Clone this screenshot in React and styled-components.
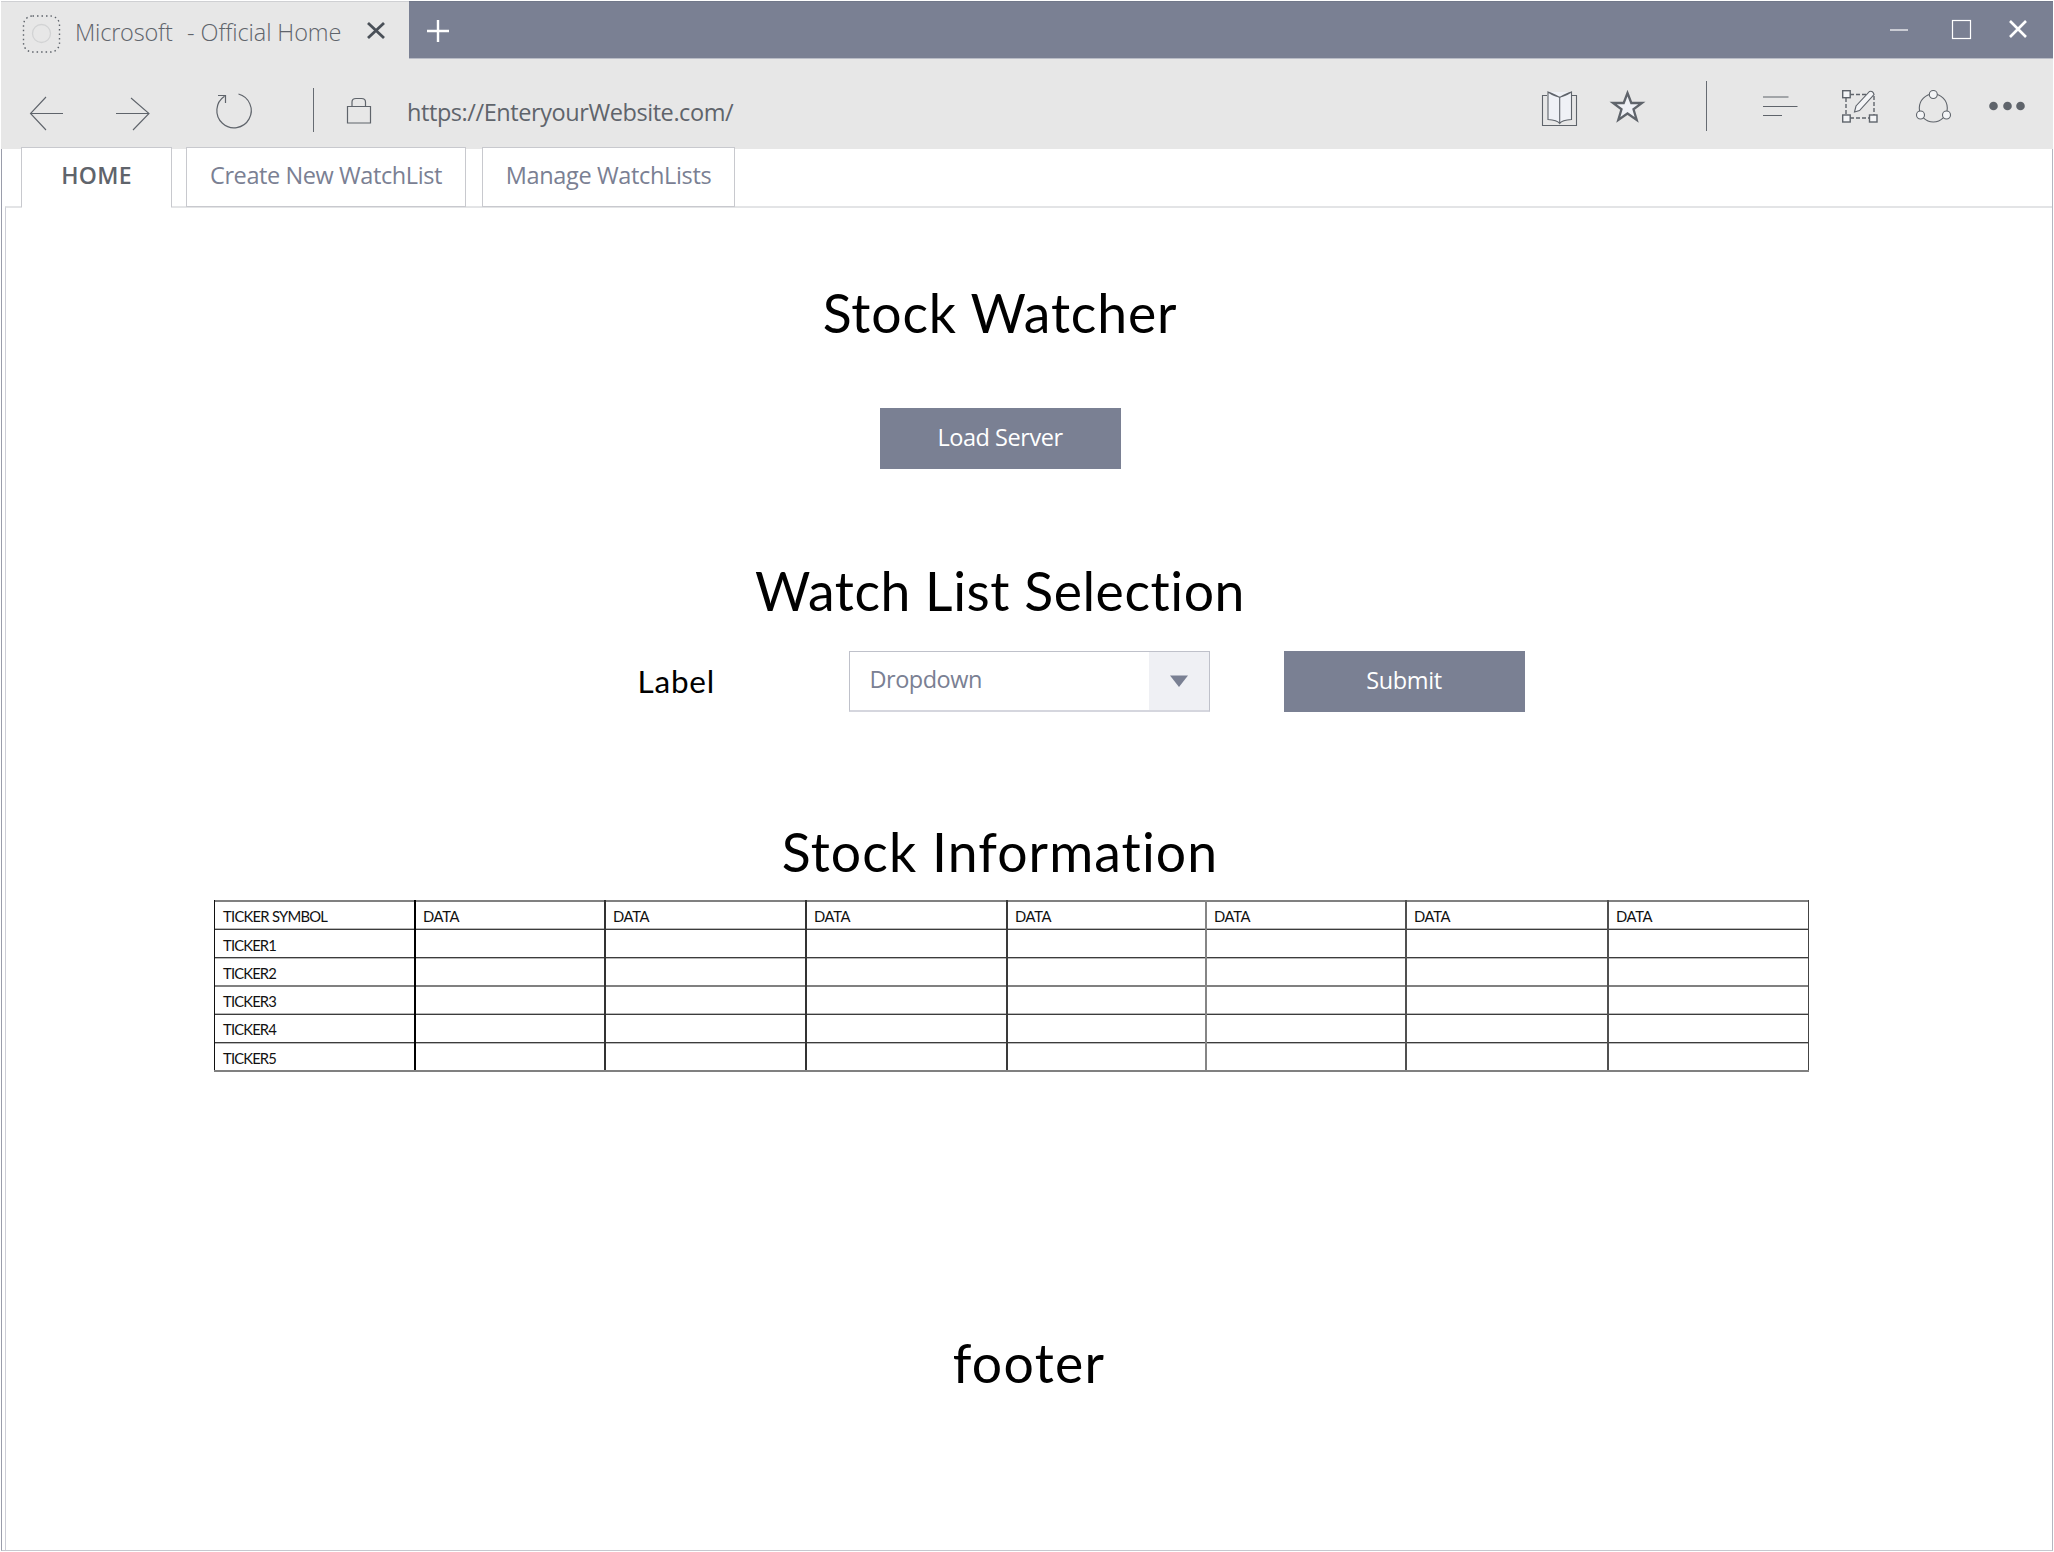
import React from "react";
import styled, { createGlobalStyle } from "styled-components";

const slate = "#7a8093";
const ink = "#5f646b";
const chrome = "#e7e7e7";
const ui = `"Open Sans", "Noto Sans", sans-serif`;
const doc = `Lato, "Noto Sans", sans-serif`;

const GlobalStyle = createGlobalStyle`
  * { box-sizing: border-box; }
  body { margin: 0; background: #fff; font-variant-ligatures: none; }
`;

const Window = styled.div`
  width: 2054px;
  height: 1552px;
  padding: 1px;
  display: flex;
  flex-direction: column;
  overflow: hidden;
  background: #fff;
  font-family: ${ui};
`;

const TitleBar = styled.header`
  display: flex;
  flex: none;
  height: 58px;
  background: ${slate};
  border-top: 1px solid #71788a;
  border-bottom: 1px solid #b9bcc6;
`;

const BrowserTab = styled.div`
  display: flex;
  width: 408px;
  height: 58px;
  margin-top: -1px;
  padding-left: 22px;
  background: ${chrome};
  border-top: 1px solid #cfd0d3;
`;

const Text = styled.span`
  white-space: pre;
  font-family: ${(p) => p.$font || ui};
  font-size: ${(p) => p.$size}px;
  font-weight: ${(p) => p.$weight || 400};
  letter-spacing: ${(p) => p.$track || 0}px;
  line-height: ${(p) => p.$line || 32}px;
  color: ${(p) => p.$color || ink};
`;

const TabTitle = styled(Text)`
  width: 272px;
  margin: 13.5px 0 0 14px;
`;

const SiteName = styled.span`
  letter-spacing: -0.2px;
  margin-right: 2.5px;
`;

const Icon = styled.svg`
  flex: none;
  display: block;
  overflow: visible;
  fill: none;
  margin-left: ${(p) => p.$left || 0}px;
  margin-top: ${(p) => p.$top || 0}px;
`;

const Spacer = styled.div`
  flex: 1;
`;

const Toolbar = styled.div`
  display: flex;
  flex: none;
  height: 90px;
  padding-right: 28px;
  background: ${chrome};
`;

const WindowControls = styled.div`
  display: flex;
  padding-right: 26px;
`;

const Divider = styled.div`
  flex: none;
  width: 1px;
  height: ${(p) => p.$height}px;
  margin: ${(p) => p.$top}px 0 0 ${(p) => p.$left}px;
  background: #666b72;
`;

const Address = styled(Text)`
  margin: 36.5px 0 0 36px;
`;

const Viewport = styled.div`
  flex: 1;
  display: flex;
  flex-direction: column;
  border-left: 1px solid #9a9dab;
  border-right: 1px solid #b4b6bf;
  border-bottom: 1px solid #c6c8cf;
  padding-left: 3px;
`;

const TabStrip = styled.nav`
  display: flex;
  flex: none;
  height: 59px;
  margin-top: -2px;
  padding-left: 16px;
`;

const PageTab = styled.div`
  width: ${(p) => p.$width}px;
  height: ${(p) => (p.$active ? 61 : 60)}px;
  margin-right: ${(p) => p.$gap || 0}px;
  padding-top: 11px;
  position: relative;
  background: #fff;
  border: 1px solid #c8c9ce;
  border-bottom-color: ${(p) => (p.$active ? "#fff" : "#c8c9ce")};
  text-align: center;
`;

const Panel = styled.main`
  flex: 1;
  display: flex;
  flex-direction: column;
  border-top: 2px solid #e3e4e6;
  border-left: 1px solid #cdced6;
`;

const Column = styled.div`
  display: flex;
  flex-direction: column;
  align-items: center;
  width: 1988px;
  padding-top: 74px;
`;

const Heading = styled.h1`
  margin: ${(p) => p.$top || 0}px 0 0 ${(p) => p.$left || 0}px;
  font-family: ${doc};
  font-size: 53.5px;
  font-weight: 400;
  line-height: 60px;
  letter-spacing: ${(p) => p.$track || 0}px;
  color: #000;
  white-space: nowrap;
`;

const Button = styled.button`
  width: 241px;
  height: 61px;
  padding: 0 0 3px;
  margin: ${(p) => p.$top || 0}px 0 0 ${(p) => p.$left || 0}px;
  border: 0;
  background: ${slate};
`;

const SelectionRow = styled.div`
  display: flex;
  width: 888px;
  margin: 31px 0 0 163px;
`;

const FieldLabel = styled(Text)`
  width: 211px;
  margin-top: 14px;
`;

const Select = styled.div`
  display: flex;
  justify-content: space-between;
  width: 361px;
  height: 61px;
  border: 1px solid #bfc1ca;
  border-bottom: 2px solid #d5d6de;
  padding-left: 20px;
  background: #fff;
`;

const SelectToggle = styled.div`
  display: flex;
  width: 60px;
  background: #eff0f4;
  justify-content: center;
  align-items: center;
`;

const Table = styled.div`
  width: 1595px;
  margin: 19px 0 0 23px;
`;

const Row = styled.div`
  display: grid;
  grid-template-columns: 200px 190px 201px 201px 199px 200px 202px 202px;
  height: ${(p) => p.$height}px;
  border-top: 1px solid ${(p) => p.$edge[0]};
  box-shadow: inset 0 1px 0 ${(p) => p.$edge[1]};
`;

const Cell = styled.div`
  border-left: ${(p) => p.$thick}px solid ${(p) => p.$color};
  margin-top: -1px;
  padding: ${(p) => p.$drop}px 0 0 ${(p) => 9 - p.$thick}px;
  font-family: ${doc};
  font-size: 14.8px;
  line-height: 24px;
  letter-spacing: ${(p) => p.$track}px;
  color: #111;
  white-space: nowrap;
  &:last-child { border-right: 1px solid #444; }
`;

const columnRules = [
  [1, "#111"], [2, "#000"], [2, "#333"], [2, "#333"],
  [2, "#3a3a3a"], [2, "#858585"], [2, "#505050"], [2, "#505050"],
];
const grey = ["#808080", "#808080"];
const rows = [
  { label: "TICKER SYMBOL", height: 28, edge: grey, head: true, track: -0.75, drop: 4.4 },
  { label: "TICKER1", height: 29, edge: ["#b8b8b8", "#3c3c3c"], track: -0.85, drop: 5.4 },
  { label: "TICKER2", height: 28, edge: ["#3c3c3c", "#b8b8b8"], track: -0.85, drop: 4.4 },
  { label: "TICKER3", height: 28, edge: grey, track: -0.85, drop: 4.4 },
  { label: "TICKER4", height: 29, edge: ["#b8b8b8", "#3c3c3c"], track: -0.85, drop: 4.4 },
  { label: "TICKER5", height: 28, edge: ["#3c3c3c", "#b8b8b8"], track: -0.85, drop: 4.4 },
];

function StockTable() {
  return (
    <Table>
      {rows.map((row) => (
        <Row key={row.label} $height={row.height} $edge={row.edge}>
          {columnRules.map(([thick, color], i) => (
            <Cell key={i} $thick={thick} $color={color} $drop={row.drop} $track={i === 0 ? row.track : -0.4}>
              {i === 0 ? row.label : row.head ? "DATA" : ""}
            </Cell>
          ))}
        </Row>
      ))}
      <Row $height={2} $edge={grey} />
    </Table>
  );
}

export default function App() {
  return (
    <>
      <GlobalStyle />
      <Window>
        <TitleBar>
          <BrowserTab>
            <Icon width="38" height="38" $top={13} stroke={ink}>
              <rect x="0.5" y="1" width="36" height="36" rx="9" strokeWidth="1.4" strokeDasharray="1.5 3" />
              <circle cx="18.5" cy="18.5" r="9" stroke="#d2d3d4" strokeWidth="1.3" />
            </Icon>
            <TabTitle $size={23.5} $weight={300} $track={-0.1}>
              <SiteName>Microsoft</SiteName>
              {"  - Official Home"}
            </TabTitle>
            <Icon width="18" height="17" $left={19.5} $top={20} stroke="#4a5058" strokeWidth="2.8">
              <path d="M1 1L17 16M17 1L1 16" />
            </Icon>
          </BrowserTab>
          <Icon width="22" height="22" $left={18} $top={18} stroke="#fff" strokeWidth="2.4">
            <path d="M0 11H22M11 0V22" />
          </Icon>
          <Spacer />
          <WindowControls>
            <Icon width="18" height="2" $top={26.5} stroke="#fff" strokeWidth="1.2">
              <path d="M0 1H18" />
            </Icon>
            <Icon width="19" height="19" $left={44} $top={18} stroke="#fff" strokeWidth="1.2">
              <rect x="0.5" y="0.5" width="18" height="18" />
            </Icon>
            <Icon width="18" height="18" $left={38} $top={18} stroke="#fff" strokeWidth="2.6">
              <path d="M1 1L17 17M17 1L1 17" />
            </Icon>
          </WindowControls>
        </TitleBar>

        <Toolbar>
          <Icon width="33" height="33" $left={29} $top={37.5} stroke={ink} strokeWidth="1.1">
            <path d="M33 16.5H0M16 0L0.5 16.5L16 33" />
          </Icon>
          <Icon width="33" height="33" $left={53} $top={37.5} stroke={ink} strokeWidth="1.1">
            <path d="M0 16.5H33M15 1L33 16.5L17 33" />
          </Icon>
          <Icon width="35" height="35" $left={67} $top={34} stroke={ink} strokeWidth="1.2">
            <path d="M22.5 1A17.2 17.2 0 1 1 8.5 3.3M2 2.5H9.5V10" />
          </Icon>
          <Divider $height={44} $left={62} $top={29} />
          <Icon width="24" height="26" $left={33} $top={39} stroke={ink} strokeWidth="1.2">
            <path d="M0.5 8.5H23.5V25H0.5ZM5 8.5V4Q5 0.5 9 0.5H14.5Q18.5 0.5 18.5 4V8.5" />
          </Icon>
          <Address $size={23.5} $track={-0.43}>https://EnteryourWebsite.com/</Address>
          <Spacer />
          <Icon width="35" height="35" $top={31.5} stroke={ink} strokeWidth="1.1">
            <path d="M5 4.5H0.5V34.5H34.5V4.5H30" />
            <path fill="#eff1f6" d="M17.7 6Q13 5.5 6 1V28.5Q15 29 17.7 32.5Q20 29 29.5 28.5V1Q22 5.5 17.7 6ZM17.7 6V32.5M6 1Q10 2 17.7 6.5Q25 2 29.5 1" />
          </Icon>
          <Icon width="35" height="33" $left={33} $top={31} stroke={ink} strokeWidth="2.3">
            <path fill="#eff1f6" d="M17.5 3L21.3 13H32L23.5 19.3L26.7 30L17.5 23.5L8.3 30L11.5 19.3L3 13H13.7Z" />
          </Icon>
          <Divider $height={50} $left={61} $top={22} />
          <Icon width="35" height="20" $left={56} $top={37} stroke={ink} strokeWidth="1.1">
            <path d="M0 1H25.5M0 10.5H34.5M0 19.5H19" />
          </Icon>
          <Icon width="36" height="33" $left={44} $top={31} stroke={ink} strokeWidth="1.4">
            <path strokeDasharray="4 2" d="M4 8V28H32V6M8 4.5H27" />
            <g fill="#f4f5f7">
              <rect x="0.7" y="0.7" width="7.5" height="7" />
              <rect x="0.7" y="25" width="7.5" height="7" />
              <rect x="27.5" y="25" width="7.5" height="7" />
              <path strokeWidth="1.1" d="M12.5 22L14 16L27.5 1.5Q31 0.5 32 4.5L17.5 20.5Z" />
            </g>
          </Icon>
          <Icon width="35" height="33" $left={38} $top={31} stroke={ink} strokeWidth="1.1">
            <circle cx="17.3" cy="18" r="14" />
            <g fill="#f4f5f7">
              <circle cx="17.3" cy="4.5" r="4" />
              <circle cx="4.5" cy="25" r="4" />
              <circle cx="30.5" cy="25" r="4" />
            </g>
          </Icon>
          <Icon width="36" height="10" $left={38} $top={42}>
            <g fill={ink}>
              <circle cx="4.5" cy="5" r="4.3" />
              <circle cx="18.5" cy="5" r="4.3" />
              <circle cx="31.5" cy="5" r="4.3" />
            </g>
          </Icon>
        </Toolbar>

        <Viewport>
          <TabStrip>
            <PageTab $active $width={151} $gap={14}>
              <Text $size={23} $weight={600} $track={0.3}>HOME</Text>
            </PageTab>
            <PageTab $width={280} $gap={16}>
              <Text $size={23.5} $track={-0.41} $color={slate}>Create New WatchList</Text>
            </PageTab>
            <PageTab $width={253}>
              <Text $size={23.5} $track={-0.35} $color={slate}>Manage WatchLists</Text>
            </PageTab>
          </TabStrip>
          <Panel>
            <Column>
              <Heading $track={0.85}>Stock Watcher</Heading>
              <Button $top={66}>
                <Text $size={23.5} $track={-0.45} $color="#fff">Load Server</Text>
              </Button>
              <Heading $top={91} $track={0.55}>Watch List Selection</Heading>
              <SelectionRow>
                <FieldLabel $font={doc} $size={31.5} $track={0.8} $color="#000">Label</FieldLabel>
                <Select>
                  <Text $size={23.5} $line={55} $track={-0.5} $color={slate}>Dropdown</Text>
                  <SelectToggle>
                    <Icon width="18" height="12">
                      <path fill={slate} d="M0 0.5H18L9 12Z" />
                    </Icon>
                  </SelectToggle>
                </Select>
                <Button $left={74}>
                  <Text $size={23.5} $track={-0.4} $color="#fff">Submit</Text>
                </Button>
              </SelectionRow>
              <Heading $top={109} $track={1.1}>Stock Information</Heading>
              <StockTable />
              <Heading $top={260} $left={58} $track={1.3}>footer</Heading>
            </Column>
          </Panel>
        </Viewport>
      </Window>
    </>
  );
}
